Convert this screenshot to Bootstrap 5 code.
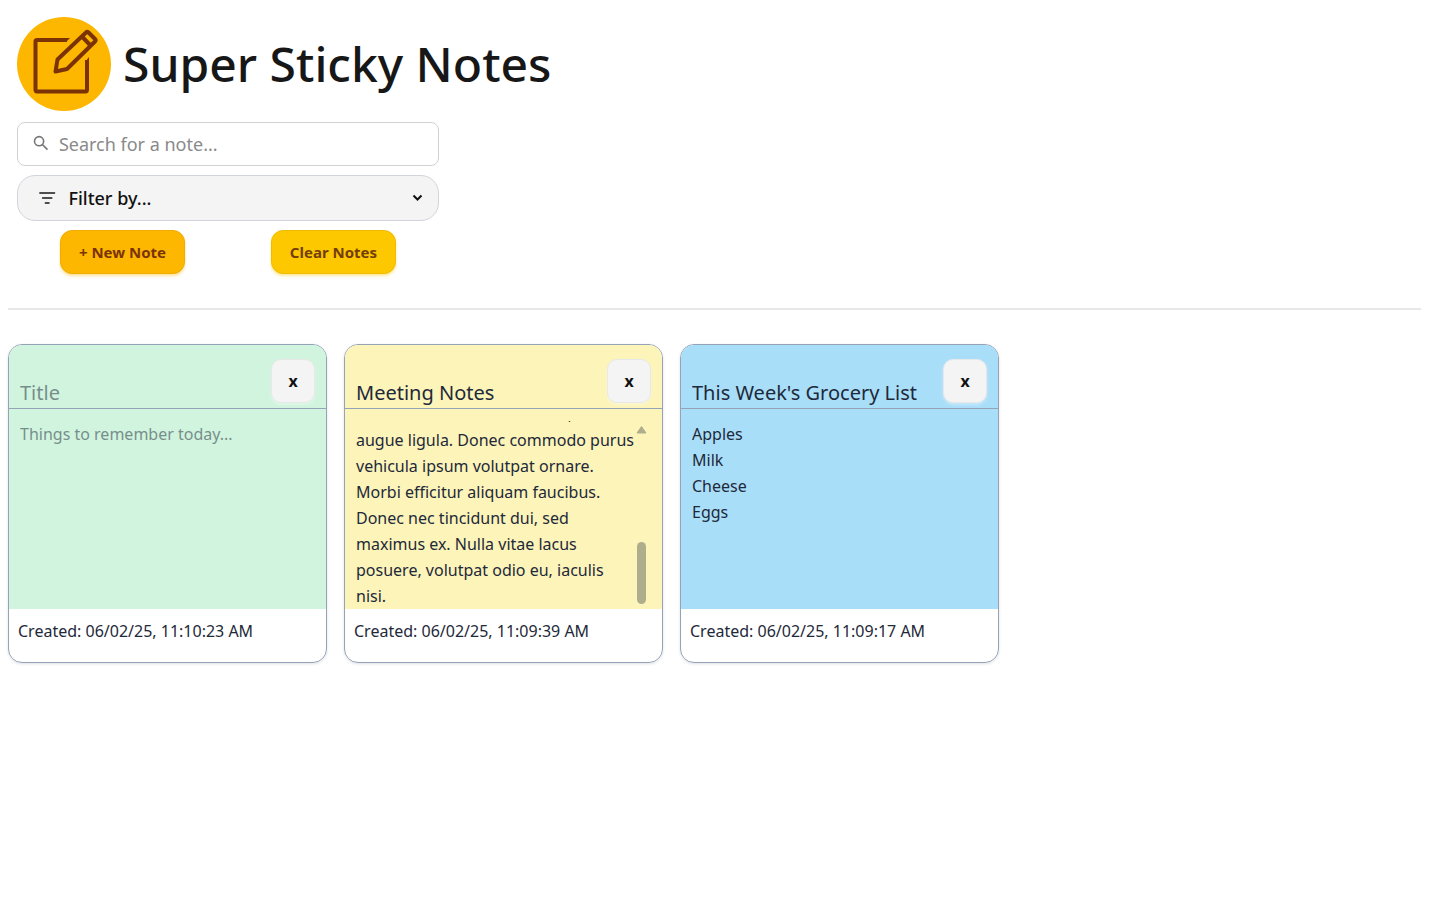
<!DOCTYPE html>
<html lang="en">
<head>
<meta charset="utf-8">
<meta name="viewport" content="width=device-width, initial-scale=1">
<title>Super Sticky Notes</title>
<link href="https://cdn.jsdelivr.net/npm/bootstrap@5.3.0/dist/css/bootstrap.min.css" rel="stylesheet">
<style>
  body { font-family: "Noto Sans", "Open Sans", sans-serif; color: #171717; background: #fff; }
  .page-head { padding: 9px 9px 0; }
  .brand-logo { width: 94px; height: 94px; flex: none; }
  .brand-title { font-size: 48px; line-height: 58px; font-weight: 500; }
  .toolbar { max-width: 422px; gap: 9px; margin-top: 11px; }
  .search-box { height: 44px; border: 1px solid #d1d1d1; border-radius: 8px; padding: 0 15px; gap: 10px; }
  .search-box input { font-size: 18px; line-height: 27px; color: #171717; outline: 0; }
  .search-box input::placeholder { color: #8a8a8a; opacity: 1; }
  .filter-box { height: 46px; border: 1px solid #d1d5db; border-radius: 18px; background: #f4f4f4; padding: 0 15px 0 20px; gap: 12px; }
  .filter-box select { font-size: 18px; line-height: 27px; font-weight: 500; color: #111; outline: 0; appearance: none;
    background: url("data:image/svg+xml,%3Csvg xmlns='http://www.w3.org/2000/svg' width='11' height='8'%3E%3Cpath d='M1.5 1.5L5.5 5.5L9.5 1.5' fill='none' stroke='%23111' stroke-width='2'/%3E%3C/svg%3E") no-repeat right center; }
  .note-btn { height: 44px; border-radius: 12px; padding: 0 18px; font-size: 15px; font-weight: 700; }
  .btn-new { --bs-btn-color: #7b3306; --bs-btn-bg: #fdb700; --bs-btn-border-color: #eeac05; --bs-btn-hover-bg: #f0ad00; --bs-btn-hover-color: #7b3306; box-shadow: 0 2px 3px #fdb70066; }
  .btn-clear { --bs-btn-color: #733e0a; --bs-btn-bg: #fdc800; --bs-btn-border-color: #eebc05; --bs-btn-hover-bg: #f0bd00; --bs-btn-hover-color: #733e0a; box-shadow: 0 2px 3px #fdc80066; }
  .divider { border-top: 2px solid #e8e8e8; margin: 34px 0; }
  .note-list { gap: 17px; }
  .note { width: 319px; border: 1px solid #94a3b8; border-radius: 14px; box-shadow: 0 1px 3px #0000001f; color: #1e2939; overflow: hidden; }
  .note-green { --note-bg: #d0f4de; }
  .note-yellow { --note-bg: #fcf4b9; }
  .note-blue { --note-bg: #a9def9; }
  .note-head { height: 64px; background: var(--note-bg); border-bottom: 1px solid #94a3b8; padding: 14px 11px 0 11px; }
  .note-head input { font-size: 20px; line-height: 30px; color: inherit; outline: 0; }
  .note input::placeholder, .note textarea::placeholder { color: #1e2939; opacity: .5; }
  .note-close { width: 44px; height: 44px; flex: none; border: 1px solid #e8e8e8; border-radius: 10px; background: #f4f4f4; color: #111; font-size: 16px; line-height: 24px; font-weight: 700; box-shadow: 0 2px 3px #ffffff55; }
  .note-body { height: 200px; background: var(--note-bg); padding: 12px 11px 0 11px; overflow: hidden; }
  .note-body textarea { height: 200px; font-size: 16px; line-height: 26px; color: inherit; outline: 0; resize: none; padding: 0 16px 12px 0; scrollbar-width: none; }
  .note-body textarea::-webkit-scrollbar { display: none; }
  .scroll-rail { top: 16px; right: 15px; bottom: 5px; width: 11px; pointer-events: none; }
  .scroll-thumb { width: 9px; height: 62px; border-radius: 5px; background: #afae8c; }
  .note-foot { height: 53px; padding: 10px 9px; font-size: 16px; line-height: 24px; }
</style>
</head>
<body class="p-2">
  <header class="page-head">
    <div class="d-flex align-items-center gap-2">
      <svg class="brand-logo" viewBox="0 0 94 94" fill="none" aria-hidden="true">
        <circle cx="47" cy="47" r="47" fill="#fdb700"/>
        <g stroke="#7b3306" stroke-width="4" stroke-linejoin="round">
          <path d="M50 23H20Q18.500 23 18.500 24.500V72.500Q18.500 74.500 20 74.500H68.500Q70 74.500 70 72.500V43"/>
          <path d="M69 15.500Q70.200 14.300 71.500 15.500L78 22Q79.300 23.300 78 24.500L50 52L38.500 54.500L40.500 42.500ZM64.500 19L73.500 28.500"/>
        </g>
        <path d="M49 21h4l-4 4zM68 45l4-5v5z" fill="#7b3306"/>
      </svg>
      <h1 class="brand-title mb-0 ms-1">Super Sticky Notes</h1>
    </div>
    <div class="toolbar d-flex flex-column">
      <label class="search-box d-flex align-items-center">
        <svg width="17" height="18" viewBox="0 0 17 18" fill="none" stroke="#757575" stroke-width="1.700" aria-hidden="true"><circle cx="6.500" cy="6" r="4.900"/><path d="M10 9.500L15.500 15"/></svg>
        <input type="search" class="border-0 p-0 bg-transparent w-100" placeholder="Search for a note..." aria-label="Search for a note">
      </label>
      <label class="filter-box d-flex align-items-center">
        <svg width="20" height="16" viewBox="0 0 20 16" fill="none" stroke="#171717" stroke-width="1.600" stroke-linecap="round" aria-hidden="true"><path d="M2 2.500H18M5 8H15M8 13.500H12"/></svg>
        <select class="border-0 p-0 w-100" aria-label="Filter notes">
          <option>Filter by...</option><option>Green</option><option>Yellow</option><option>Blue</option>
        </select>
      </label>
      <div class="d-flex justify-content-around">
        <button type="button" class="btn note-btn btn-new">+ New Note</button>
        <button type="button" class="btn note-btn btn-clear">Clear Notes</button>
      </div>
    </div>
  </header>
  <div class="divider"></div>
  <main class="note-list d-flex flex-wrap">
    <article class="note note-green">
      <div class="note-head d-flex">
        <input class="border-0 p-0 bg-transparent w-100 align-self-end" placeholder="Title" aria-label="Note title">
        <button type="button" class="note-close p-0" aria-label="Delete note">x</button>
      </div>
      <div class="note-body"><textarea class="border-0 bg-transparent w-100 d-block" placeholder="Things to remember today..." aria-label="Note text"></textarea></div>
      <div class="note-foot">Created: 06/02/25, 11:10:23 AM</div>
    </article>
    <article class="note note-yellow">
      <div class="note-head d-flex">
        <input class="border-0 p-0 bg-transparent w-100 align-self-end" value="Meeting Notes" aria-label="Note title">
        <button type="button" class="note-close p-0" aria-label="Delete note">x</button>
      </div>
      <div class="note-body position-relative">
        <textarea id="meeting" class="border-0 bg-transparent w-100 d-block" aria-label="Note text">Lorem ipsum dolor sit amet, consectetur adipiscing elit. Vestibulum sed nisl eget mi laoreet tempor. Integer vitae ante at nulla cursus feugiat. Sed id ligula at nunc posuere luctus. Curabitur non lorem in odio viverra mattis. Aenean et tortor vitae lectus dictum rhoncus. Praesent sed metus vel risus blandit tempus. Nam a mi non urna sodales volutpat. Vivamus id erat in justo pretium dictum. Sed vel nibh eu nisi commodo iaculis.
Nunc sed nulla ac mauris mi, sed
augue ligula. Donec commodo purus vehicula ipsum volutpat ornare. Morbi efficitur aliquam faucibus. Donec nec tincidunt dui, sed maximus ex. Nulla vitae lacus posuere, volutpat odio eu, iaculis nisi.</textarea>
        <div class="scroll-rail position-absolute d-flex flex-column align-items-center justify-content-between" aria-hidden="true">
          <svg width="11" height="9" viewBox="0 0 11 9"><path d="M5.500 1.500L10 8H1Z" fill="#afae8c" stroke="#afae8c" stroke-linejoin="round"/></svg>
          <div class="scroll-thumb"></div>
        </div>
      </div>
      <div class="note-foot">Created: 06/02/25, 11:09:39 AM</div>
    </article>
    <article class="note note-blue">
      <div class="note-head d-flex">
        <input class="border-0 p-0 bg-transparent w-100 align-self-end" value="This Week's Grocery List" aria-label="Note title">
        <button type="button" class="note-close p-0" aria-label="Delete note">x</button>
      </div>
      <div class="note-body"><textarea class="border-0 bg-transparent w-100 d-block" aria-label="Note text">Apples
Milk
Cheese
Eggs</textarea></div>
      <div class="note-foot">Created: 06/02/25, 11:09:17 AM</div>
    </article>
  </main>
  <script src="https://cdn.jsdelivr.net/npm/bootstrap@5.3.0/dist/js/bootstrap.bundle.min.js"></script>
  <script>
    // Open the meeting note at its latest lines.
    const meeting = document.getElementById('meeting');
    meeting.scrollTop = meeting.scrollHeight;
  </script>
</body>
</html>
